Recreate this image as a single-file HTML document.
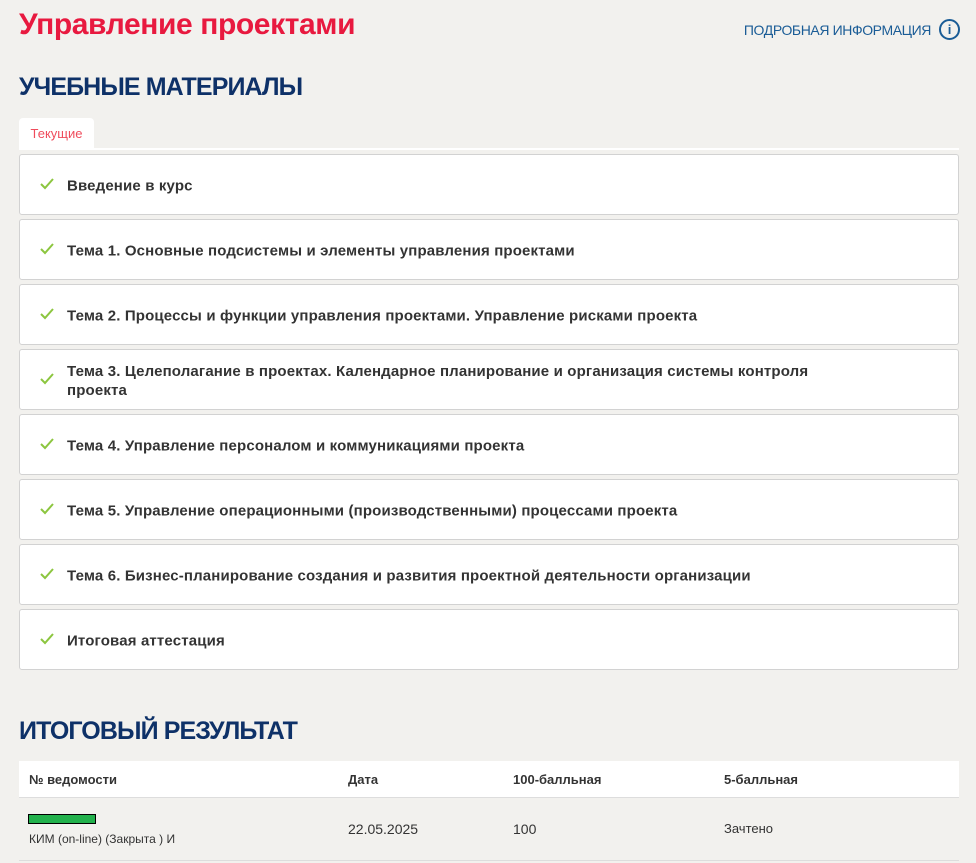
<!DOCTYPE html>
<html><head><meta charset="utf-8"><style>
body{margin:0;background:#f2f1ee;font-family:"Liberation Sans","DejaVu Sans",sans-serif;width:976px;height:863px;overflow:hidden;position:relative}
.a{position:absolute}
h1{position:absolute;left:19px;top:8px;margin:0;font-size:30px;font-weight:bold;color:#e8193f;letter-spacing:-0.4px}
h2{position:absolute;left:19px;margin:0;font-size:25px;font-weight:bold;color:#0e3168;letter-spacing:-0.9px}
.info{right:45px;top:22px;font-size:14px;color:#1a5c96;letter-spacing:-0.4px}
.ic{position:absolute;left:939px;top:19px;width:17px;height:17px;border:2px solid #1a5c96;border-radius:50%;color:#1a5c96;font-size:13px;font-weight:bold;text-align:center;line-height:17px}
.tab{left:19px;top:118px;width:75px;height:30px;background:#fff;border-radius:4px 4px 0 0;color:#ef4c5c;font-size:13px;text-align:center;line-height:31px}
.ln{left:19px;top:148px;width:940px;height:2px;background:#fff}
.it{position:absolute;left:19px;width:938px;height:59px;background:#fff;border:1px solid #d2d2d2;border-radius:3px;font-size:15px;font-weight:bold;color:#333;letter-spacing:0.15px}
.it span{position:absolute;left:47px;top:50%;transform:translateY(-50%);margin-top:1px;width:760px;line-height:19px}
.it svg{position:absolute;left:20px;top:50%;margin-top:-7px}
.th{left:19px;top:761px;width:940px;height:36px;background:#fff;border-bottom:1px solid #ddd}
.t{position:absolute;font-size:13px;color:#333}
.b{font-weight:bold}
</style></head><body>
<h1>Управление проектами</h1>
<div class="a info">ПОДРОБНАЯ ИНФОРМАЦИЯ</div><div class="ic">i</div>
<h2 style="top:73px">УЧЕБНЫЕ МАТЕРИАЛЫ</h2>
<div class="a tab">Текущие</div><div class="a ln"></div>
<div class="it" style="top:154px"><svg width="14" height="12"><path d="M1 6l4 4 8-9" stroke="#8cc63f" stroke-width="2" fill="none"/></svg><span>Введение в курс</span></div>
<div class="it" style="top:219px"><svg width="14" height="12"><path d="M1 6l4 4 8-9" stroke="#8cc63f" stroke-width="2" fill="none"/></svg><span>Тема 1. Основные подсистемы и элементы управления проектами</span></div>
<div class="it" style="top:284px"><svg width="14" height="12"><path d="M1 6l4 4 8-9" stroke="#8cc63f" stroke-width="2" fill="none"/></svg><span>Тема 2. Процессы и функции управления проектами. Управление рисками проекта</span></div>
<div class="it" style="top:349px"><svg width="14" height="12"><path d="M1 6l4 4 8-9" stroke="#8cc63f" stroke-width="2" fill="none"/></svg><span>Тема 3. Целеполагание в проектах. Календарное планирование и организация системы контроля проекта</span></div>
<div class="it" style="top:414px"><svg width="14" height="12"><path d="M1 6l4 4 8-9" stroke="#8cc63f" stroke-width="2" fill="none"/></svg><span>Тема 4. Управление персоналом и коммуникациями проекта</span></div>
<div class="it" style="top:479px"><svg width="14" height="12"><path d="M1 6l4 4 8-9" stroke="#8cc63f" stroke-width="2" fill="none"/></svg><span>Тема 5. Управление операционными (производственными) процессами проекта</span></div>
<div class="it" style="top:544px"><svg width="14" height="12"><path d="M1 6l4 4 8-9" stroke="#8cc63f" stroke-width="2" fill="none"/></svg><span>Тема 6. Бизнес-планирование создания и развития проектной деятельности организации</span></div>
<div class="it" style="top:609px"><svg width="14" height="12"><path d="M1 6l4 4 8-9" stroke="#8cc63f" stroke-width="2" fill="none"/></svg><span>Итоговая аттестация</span></div>
<h2 style="top:717px">ИТОГОВЫЙ РЕЗУЛЬТАТ</h2>
<div class="a th"></div>
<div class="t b" style="left:29px;top:772px">№ ведомости</div>
<div class="t b" style="left:348px;top:772px">Дата</div>
<div class="t b" style="left:513px;top:772px">100-балльная</div>
<div class="t b" style="left:724px;top:772px">5-балльная</div>
<div class="a" style="left:28px;top:814px;width:66px;height:8px;background:#22b14c;border:1px solid #000"></div>
<div class="t" style="left:29px;top:832px;font-size:12px">КИМ (on-line) (Закрыта ) И</div>
<div class="t" style="left:348px;top:821px;font-size:14px">22.05.2025</div>
<div class="t" style="left:513px;top:821px;font-size:14px">100</div>
<div class="t" style="left:724px;top:821px">Зачтено</div>
<div class="a" style="left:19px;top:860px;width:940px;height:1px;background:#ddd"></div>
</body></html>
